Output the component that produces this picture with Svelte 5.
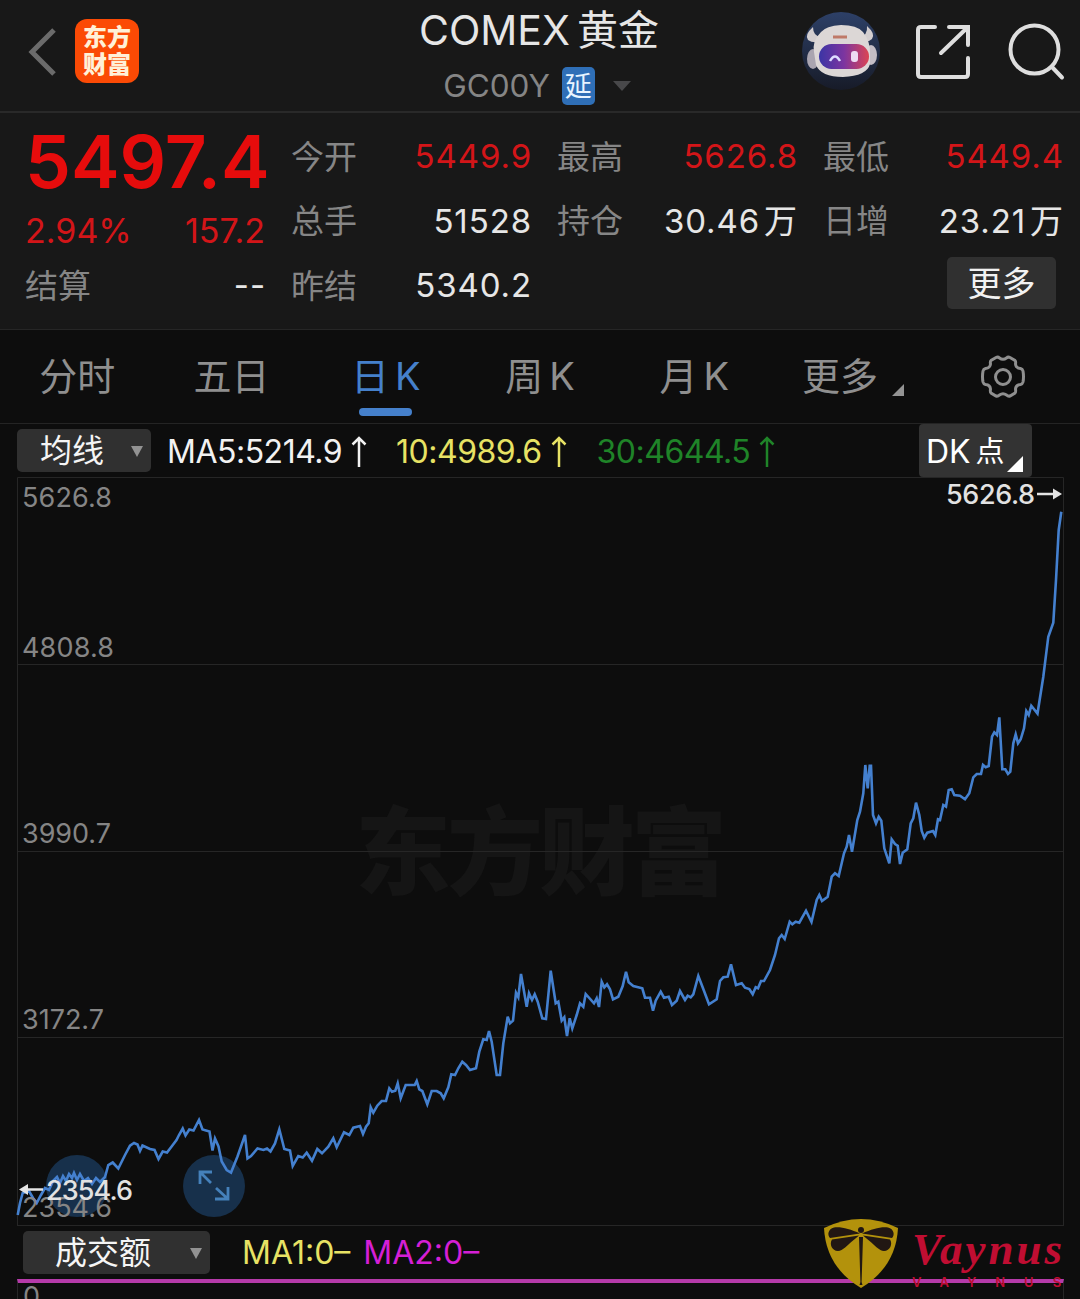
<script>
  const columns = [
    [
      { label: "今开", value: "5449.9", up: true },
      { label: "总手", value: "51528" },
      { label: "昨结", value: "5340.2" },
    ],
    [
      { label: "最高", value: "5626.8", up: true },
      { label: "持仓", value: "30.46", unit: "万" },
    ],
    [
      { label: "最低", value: "5449.4", up: true },
      { label: "日增", value: "23.21", unit: "万" },
    ],
  ];

  const tabs = [
    { name: "分时" },
    { name: "五日" },
    { name: "日", k: true },
    { name: "周", k: true },
    { name: "月", k: true },
    { name: "更多", more: true },
  ];
  let active = 2;

  const averages = [
    { text: "MA5:5214.9", cls: "ma5" },
    { text: "10:4989.6", cls: "ma10" },
    { text: "30:4644.5", cls: "ma30" },
  ];

  const axis = [
    { y: 507, text: "5626.8", w: 90 },
    { y: 656.5, text: "4808.8", w: 92 },
    { y: 843, text: "3990.7", w: 89 },
    { y: 1029, text: "3172.7", w: 82 },
    { y: 1216.5, text: "2354.6", w: 90 },
  ];
  const gridLines = [664.5, 851.5, 1037.5];

  const points = `17.7,1215 20,1203 22.7,1193 29,1191 33,1198 36.7,1203 41,1195 45,1188 49,1190 53,1181 57,1177 60,1183 63,1176
    66,1181 69,1174 72,1178 74,1173 77,1180 80,1174 84,1181 88,1178 92,1184 96,1178 100,1182 105,1177
    108.3,1165 112.7,1162.5 118.3,1168.5 125,1155 130,1145.7 134,1143 137.5,1144.5 140,1151 142.5,1145.5
    150,1149 154.5,1150 158.5,1159 162.7,1151.5 167,1152.5 172,1146 176.5,1140 179,1135 182.7,1128.5
    185.5,1135.5 189.3,1129.5 193.5,1130.5 199,1120 202.5,1129.5 209.5,1131.5 212.5,1150.5 215,1138.5
    218.5,1146.5 221.7,1161.5 226.7,1170 231,1172.5 237.5,1156.5 245,1135 247.5,1158.5 251,1156
    257.5,1148.5 263.5,1150 267,1148.5 270.5,1151.5 275,1143.5 279.3,1129.3 284.3,1149 290,1150.5
    292.7,1166 298.3,1156 302.7,1157.5 306.7,1152.7 312,1160.7 317.3,1149 322,1153.3 328.3,1146.7
    333.3,1138.3 336.7,1147.3 344,1132.3 349.3,1135 353.3,1127.7 360,1126 363,1134 366,1126.7
    368.7,1123.3 370.7,1107.3 373.3,1112.7 377.3,1105.7 381.7,1101 386,1101 389.3,1088.3 392,1091.7
    395.3,1090.7 397.7,1083.3 400.7,1098.3 405.7,1085 414.7,1085 416.7,1081 419.3,1089.3 422.3,1091
    427.3,1104.3 431.7,1091 436.7,1091 440.7,1093.3 443.7,1098.3 448.3,1087.3 451.3,1074.3 455,1075
    458.3,1068.3 462.3,1061.7 466,1065 470,1070 476,1068.3 479.3,1051.7 483.3,1039.3 486.7,1040
    489,1031 491.7,1041.7 496.7,1075 500,1075 503.3,1043.3 507.7,1016.7 510,1023.3 513,1020.7
    516,992.7 518.3,997.3 521,974 526.7,1006.7 529,993.3 532,1000 534.7,994.3 537.7,1001.7
    542.3,1018.3 546,1019 550.7,970.7 555.7,1003.3 558.3,1001.7 561.7,1020.7 564.3,1017.3 567,1036
    569.7,1018.3 572.3,1028.3 576.7,1015 580,1003.3 583.3,1006.7 585.7,994 594,1003.3 596.7,998.3
    599,1007 601.7,981.7 604.3,987.3 607,984.3 610,989.3 613,999.3 618.3,996.7 622.7,986 626,971.7
    628.7,982.3 633.3,986 642.3,988.3 645,997.7 650,997.7 653,1010.7 655.7,1000.7 660.7,991.7
    664,997.7 668.7,996.7 672,1005 676.7,1000.7 680,991 685,1000 687.7,995.7 690.7,997.3 693.3,994.3
    698.3,976 703.3,989 709,1004.3 716.7,999.3 720,981 723.3,977.3 727.7,976.7 731,964.3 736,985
    741.7,983.3 745,987.7 749.3,989 752.7,994.3 755.7,987.3 758,988.3 761,981 764,981 770,970
    775,955 779,938.3 781.7,935 784.7,939 789.7,921.7 792.3,924.3 795.7,921.7 799.3,922.7 806,910.7
    811.5,922 816.7,900 819.3,895 822,901 827.7,896.7 831.7,876.7 835,873.3 838.7,876 844,853.3
    846.7,846.7 849,835 852,851.7 857.3,820 860,811.7 863.3,793.3 865.3,765 867.7,788.3 869.7,765.7
    871,765.7 873,815 876,823.3 878.7,816.7 881.3,820.7 884.3,848.3 889.3,863.3 891.7,839.3 895,844
    897.7,845.7 900,864 902.7,852.7 907.3,849.3 910.7,823.3 913.3,818.3 916,802.7 919.3,815
    921.7,831 924.3,837.7 927.3,832.7 933,831 935.3,835 938,819.3 940,820 943.3,805 946,806.7
    948.7,790 951.7,789.3 954.3,795 960,795.7 965,799.3 969.3,793.3 973.3,777.3 976.7,774 981,774
    983,765 985.7,767.3 988.7,766 992,736.7 994.3,732.3 997,735 999.3,717.3 1002.3,769.3
    1005.3,769.3 1008,774 1010.3,771.7 1013.3,743.3 1015.7,734.3 1018,743.3 1020.7,739.3
    1024,728.3 1026.3,711 1028.7,715 1031.3,705.7 1037.5,713.5 1043.3,676.7 1048.3,636.7
    1053.3,622.7 1056,580 1058.7,530 1061.3,511.7`;
</script>

<main>
  <header>
    <div class="left">
      <svg class="back" width="30" height="50" viewBox="0 0 30 50"><path d="M26 4 L4 26 L26 48" /></svg>
      <div class="logo"><span>东方</span><span>财富</span></div>
    </div>
    <div class="title">
      <h1>COMEX<span>黄金</span></h1>
      <div class="code">
        <span class="symbol">GC00Y</span>
        <span class="delay">延</span>
        <svg width="20" height="12" viewBox="0 0 20 12"><path d="M1 1H19L10 11Z" fill="#48484a" /></svg>
      </div>
    </div>
    <div class="right">
      <svg class="robot" width="80" height="80" viewBox="0 0 80 80">
        <defs>
          <linearGradient id="visor">
            <stop offset="0" stop-color="#3b35a5" />
            <stop offset=".5" stop-color="#7c35a0" />
            <stop offset="1" stop-color="#dc4553" />
          </linearGradient>
          <linearGradient id="sky" x2="0" y2="1">
            <stop offset="0" stop-color="#2d4067" />
            <stop offset="1" stop-color="#171b28" />
          </linearGradient>
        </defs>
        <circle cx="40" cy="39" r="39" fill="url(#sky)" />
        <path d="M12 15Q3 23 7 28Q11 31 18 30L20 25Q12 24 12 15Z" fill="#d3cecf" />
        <path d="M66 14Q75 22 71 27Q67 31 60 29L58 25Q67 24 66 14Z" fill="#d3cecf" />
        <ellipse cx="12" cy="47" rx="6" ry="10" fill="#aaa5b0" />
        <ellipse cx="70" cy="43" rx="6" ry="10" fill="#c3bdc5" />
        <path d="M13 40Q11 29 20 20Q25 14 40 13Q56 13 62 20Q69 29 69 40V52Q66 64 42 65Q20 65 15 53Z" fill="#dcd7d6" />
        <rect x="18" y="32" width="50" height="25" rx="12.5" fill="url(#visor)" />
        <path d="M32 25H46" stroke="#bf7968" stroke-width="3" />
        <path d="M29 49Q34 40 39 49" fill="none" stroke="#dedcff" stroke-width="2.5" />
        <rect x="50" y="39" width="7" height="11" rx="3" fill="#eddcf3" />
      </svg>
      <svg width="56" height="56" viewBox="0 0 56 56">
        <path d="M20 3H6Q3 3 3 6V50Q3 53 6 53H50Q53 53 53 50V34 M34 3H53V21 M53 3L26 29" />
      </svg>
      <svg width="58" height="58" viewBox="0 0 58 58">
        <circle cx="27.5" cy="26.5" r="24" /><path d="M45 44L55 54.500" />
      </svg>
    </div>
  </header>

  <section class="quote">
    <div class="col first">
      <div class="price">5497.4</div>
      <div class="row change"><span>2.94%</span><span>157.2</span></div>
      <div class="row settle"><span class="label">结算</span><span class="value dash">--</span></div>
    </div>
    {#each columns as col, i}
      <div class="col">
        {#each col as item}
          <div class="row">
            <span class="label">{item.label}</span>
            <span class="value" class:up={item.up}>{item.value}{#if item.unit}<i>{item.unit}</i>{/if}</span>
          </div>
        {/each}
        {#if i == 2}
          <div class="row"><button class="more">更多</button></div>
        {/if}
      </div>
    {/each}
  </section>

  <nav>
    {#each tabs as tab, i}
      <button class="tab" class:active={i == active} on:click={() => (active = i)}>
        <span class="name" class:wide={tab.more}>{tab.name}{#if tab.k}<b>K</b>{/if}{#if tab.more}<svg width="12" height="12" viewBox="0 0 12 12"><path d="M12 0V12H0Z" fill="#939393" /></svg>{/if}</span>
      </button>
    {/each}
    <button class="tab">
      <svg class="gear" width="46" height="46" viewBox="0 0 46 46">
        <path d="M16 3.5Q18 2.5 19.500 4Q23 6.500 26.500 4Q28 2.500 30 3.500L35 6.500Q36 7.500 35.500 10Q35.800 14 40.500 14.500Q42.500 15 43 17Q44 23 43 28Q42.500 30 40.500 30.500Q35.800 31 35.500 35Q36 38 35 39L30 42Q28 42.500 26.500 41Q23 38.500 19.500 41Q18 42.500 16 42L11 39Q10 38 10.500 35Q10.200 31 5.500 30.500Q3.500 30 3 28Q2 23 3 17Q3.500 15 5.500 14.500Q10.200 14 10.500 10Q10 7.500 11 6.500Z" />
        <circle cx="23" cy="23" r="7.500" />
      </svg>
    </button>
  </nav>

  <section class="ma">
    <button class="select">均线<svg width="12" height="11" viewBox="0 0 12 11"><path d="M0 0H12L6 11Z" fill="#929292" /></svg></button>
    {#each averages as a}
      <span class={a.cls}>{a.text}<svg width="16" height="32" viewBox="0 0 16 32"><path d="M8 31V2M1.500 8.500L8 2L14.500 8.500" /></svg></span>
    {/each}
    <button class="dk">DK<span>点</span><svg width="16" height="16" viewBox="0 0 16 16"><path d="M16 0V16H0Z" fill="#fff" /></svg></button>
  </section>

  <svg class="chart" width="1080" height="749" viewBox="0 477 1080 749">
    <text class="watermark" x="355" y="887" textLength="372">东方财富</text>
    <path class="frame" d="M17.500 1226V477.500H1063.500V1226M17 1225.500H1064" />
    {#each gridLines as y}
      <line class="frame" x1="17" x2="1063" y1={y} y2={y} />
    {/each}
    <circle cx="77" cy="1186" r="31" fill="#17304b" />
    <circle cx="214" cy="1186" r="31" fill="#17304b" />
    <path class="expand" d="M200 1184V1172H212M200 1172L211 1183M228 1187V1199H215M228 1199L216 1188" />
    <polyline class="line" {points} />
    {#each axis as a}
      <text class="axis" x="22" y={a.y} textLength={a.w}>{a.text}</text>
    {/each}
    <text class="mark" x="946" y="504" textLength="89">5626.8</text>
    <path class="arrow" d="M1037 494H1055" /><path d="M1053 488.500L1062 494L1053 499.500Z" fill="#e4e4e4" />
    <text class="mark" x="46" y="1199.500" textLength="87">2354.6</text>
    <path class="arrow" d="M43 1189.500H26" /><path d="M28 1184L19 1189.500L28 1195Z" fill="#e4e4e4" />
  </svg>

  <section class="volume">
    <div class="bar">
      <button class="select">成交额<svg width="12" height="11" viewBox="0 0 12 11"><path d="M0 0H12L6 11Z" fill="#929292" /></svg></button>
      <span class="v1">MA1:0–</span>
      <span class="v2">MA2:0–</span>
    </div>
    <div class="plot">0</div>
  </section>

  <div class="brand">
    <svg width="76" height="70" viewBox="0 0 76 70">
      <path d="M1 9Q38 -9 75 9Q73 48 38 69Q3 48 1 9Z" fill="#b3920c" />
      <g fill="#211713">
        <circle cx="38" cy="11" r="3" />
        <path d="M37 14.500C27 10 18 7.500 11 8.500C5 10 4 16 7 19Z" />
        <path d="M39 14.500C49 10 58 7.500 65 8.500C71 10 72 16 69 19Z" />
        <path d="M36 16.500L9 20.500C6 25 9 32 15 32C20 32 23 27 36 16.500Z" />
        <path d="M40 16.500L67 20.500C70 25 67 32 61 32C56 32 53 27 40 16.500Z" />
        <path d="M36 18H40L38.600 63L39.500 66H36.500L37.400 63Z" />
      </g>
    </svg>
    <div class="words"><strong>Vaynus</strong><small>VAYNUS</small></div>
  </div>
</main>

<style>
:global(body) {
  background: #0d0d0d;
}

main {
  position: relative;
  width: 1080px;
  height: 1299px;
  overflow: hidden;
  background: #0d0d0d;
  color: #e6e6e6;
  font-family: Inter, "Noto Sans CJK SC", sans-serif;
  line-height: 1.2;
}

button {
  border: 0;
  padding: 0;
  background: none;
  color: inherit;
  font: inherit;
}

header {
  display: grid;
  grid-template-columns: 400px 278px 402px;
  box-sizing: border-box;
  height: 113px;
  background: #181818;
  border-bottom: 2px solid #292929;
}

.left {
  display: flex;
  align-items: center;
  gap: 17px;
  height: 102px;
  padding-left: 28px;
}

.back path {
  fill: none;
  stroke: #6b6b6b;
  stroke-width: 5;
}

.logo {
  display: flex;
  flex-direction: column;
  align-items: center;
  justify-content: center;
  width: 64px;
  height: 64px;
  border-radius: 12px;
  background: #fb4a05;
  color: #fff1d8;
  font-size: 24px;
  font-weight: 900;
  line-height: 27px;
}

.title {
  display: flex;
  flex-direction: column;
  align-items: center;
}

h1 {
  margin: 6px 0 0;
  font-size: 41px;
  font-weight: 400;
  line-height: 48px;
  white-space: nowrap;
}

h1 span {
  margin-left: 7px;
}

.code {
  display: flex;
  align-items: center;
  gap: 12px;
  height: 38px;
  margin: 13px 3px 0 0;
  color: #858585;
}

.symbol {
  font-size: 31.500px;
}

.delay {
  width: 33px;
  height: 38px;
  border-radius: 5px;
  background: #2f6fb7;
  color: #e8f4ff;
  font-size: 27px;
  line-height: 39px;
  text-align: center;
}

.code svg {
  margin-left: 5px;
}

.right {
  display: flex;
  align-items: center;
  justify-content: flex-end;
  gap: 36px;
  height: 104px;
  padding-right: 15px;
}

.right svg:not(.robot) {
  fill: none;
  stroke: #dedede;
  stroke-width: 4;
  stroke-linecap: round;
}

.robot {
  margin-right: -2px;
}

.quote {
  display: grid;
  grid-template-columns: repeat(4, 240px);
  gap: 26px;
  box-sizing: border-box;
  height: 217px;
  padding: 12px 17px 0 25px;
  background: #181818;
  border-bottom: 1px solid #262626;
}

.row {
  display: flex;
  align-items: center;
  justify-content: space-between;
  height: 64.500px;
  font-size: 33px;
  white-space: nowrap;
}

.label {
  padding-top: 1px;
  color: #868686;
}

.value {
  margin-right: -1px;
  letter-spacing: 0.900px;
}

.value i {
  margin-left: 4px;
  font-style: normal;
}

.price {
  height: 74px;
  color: #e60c0c;
  font-size: 73px;
  font-weight: 600;
  line-height: 73px;
}

.change {
  height: 64px;
  font-size: 34px;
}

.change, .up {
  color: #d31518;
}

.settle {
  height: 46px;
}

.more {
  width: 109px;
  height: 52px;
  margin: -7px 7px 0 auto;
  border-radius: 5px;
  background: #303030;
  color: #f2f2f2;
  font-size: 34px;
  line-height: 54px;
}

nav {
  display: grid;
  grid-template-columns: repeat(7, 1fr);
  box-sizing: border-box;
  height: 94px;
  border-bottom: 1px solid #242424;
}

.tab {
  display: flex;
  align-items: center;
  justify-content: center;
  color: #8f8f8f;
  font-size: 38px;
}

.name {
  display: flex;
  align-items: center;
  height: 94px;
}

.name b {
  margin-left: 6px;
  font-weight: 400;
}

.name svg {
  margin: 26px 0 0 14px;
}

.wide {
  padding-left: 9px;
}

.active {
  flex-direction: column;
  justify-content: flex-start;
  color: #4580cb;
}

.active::after {
  content: "";
  width: 53px;
  height: 8px;
  margin-top: -16px;
  border-radius: 4px;
  background: #4580cb;
}

.gear {
  fill: none;
  stroke: #8f8f8f;
  stroke-width: 3;
}

.ma {
  display: flex;
  align-items: center;
  height: 53px;
  padding-left: 17px;
  font-size: 32px;
  white-space: nowrap;
}

.ma > span {
  display: flex;
  align-items: center;
  letter-spacing: -0.500px;
  padding-top: 3px;
}

.ma > span svg {
  margin-left: 9px;
  fill: none;
  stroke: currentColor;
  stroke-width: 2.500;
}

.select {
  display: flex;
  align-items: center;
  justify-content: space-between;
  box-sizing: border-box;
  width: 134px;
  height: 43px;
  padding: 2px 8px 0 23px;
  border-radius: 5px;
  background: #303030;
  color: #f5f5f5;
  font-size: 32px;
}

.ma5 {
  margin-left: 16px;
  color: #f2f2f2;
}

.ma10 {
  margin-left: 29px;
  color: #e7e264;
}

.ma30 {
  margin-left: 30px;
  color: #1f8428;
}

.dk {
  display: flex;
  align-items: center;
  width: 113px;
  height: 53px;
  margin: 0 48px 0 auto;
  padding: 4px 0 0 7px;
  box-sizing: border-box;
  border-radius: 4px;
  background: #333;
  color: #fff;
}

.dk span {
  margin-left: 5px;
  font-size: 29px;
}

.dk svg {
  margin: 22px 0 0 2px;
}

.chart {
  display: block;
}

.frame {
  fill: none;
  stroke: #262626;
}

.watermark {
  fill: #151515;
  font-size: 96px;
  font-weight: 900;
}

.line {
  fill: none;
  stroke: #4480cf;
  stroke-width: 2.600;
}

.axis {
  fill: #858585;
  font-size: 27px;
}

.mark {
  fill: #e2e2e2;
  font-size: 27px;
  font-weight: 500;
}

.arrow {
  stroke: #e4e4e4;
  stroke-width: 2.500;
}

.expand {
  fill: none;
  stroke: #4581bb;
  stroke-width: 2.800;
}

.bar {
  display: flex;
  align-items: center;
  height: 53px;
  padding-left: 23px;
  font-size: 32px;
}

.bar span {
  padding-top: 2px;
}

.bar .select {
  width: 187px;
  padding-left: 32px;
}

.v1 {
  margin-left: 32px;
  color: #e7e264;
}

.v2 {
  margin-left: 13px;
  color: #d51fd5;
}

.plot {
  height: 30px;
  margin: 0 16px 0 17px;
  padding-left: 5px;
  border: 1px solid #262626;
  border-top: 4px solid #b53aa9;
  color: #858585;
  font-size: 27px;
  line-height: 28px;
}

.brand {
  position: absolute;
  left: 823px;
  top: 1219px;
  display: flex;
  gap: 13px;
  color: #c00d32;
}

.words {
  display: flex;
  flex-direction: column;
  padding-top: 4px;
}

strong {
  font-family: "Liberation Serif", serif;
  font-size: 45px;
  font-style: italic;
  letter-spacing: 3px;
  line-height: 52px;
}

small {
  margin-right: -18px;
  font-size: 13px;
  font-weight: 600;
  letter-spacing: 19px;
  line-height: 15px;
}
</style>
